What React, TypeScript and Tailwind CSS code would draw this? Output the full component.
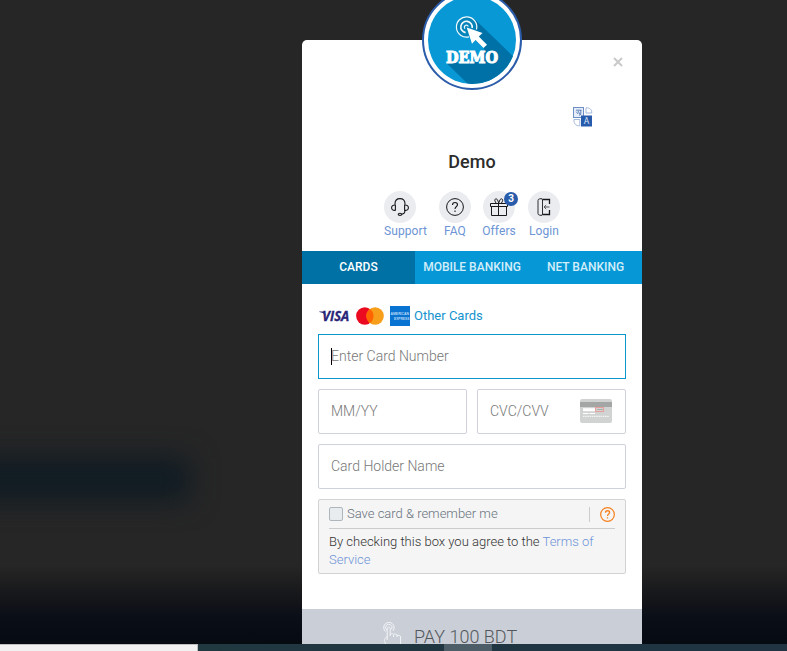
import type { ReactNode } from 'react';

function DemoLogo() {
  return (
    <svg className="block h-full w-full" viewBox="0 0 100 100">
      <defs>
        <clipPath id="disc"><circle cx="50" cy="50" r="44" /></clipPath>
      </defs>
      <circle cx="50" cy="50" r="49" fill="#fff" stroke="#2a5caa" strokeWidth="2" />
      <circle cx="50" cy="50" r="44" fill="#0798d5" />
      <g clipPath="url(#disc)">
        <path d="M52.5 29L98 73L80 100H52L24.5 73L62 72V58L45 43Z" fill="#0071a6" />
      </g>
      <circle cx="44.5" cy="37" r="10.2" fill="#0784ba" />
      <g fill="none" stroke="#f4fbff">
        <path d="M47 46.9A10.2 10.2 0 1 1 54.5 39.5" strokeWidth="1.2" />
        <path d="M43.6 42.6A5.7 5.7 0 1 1 50.1 38" strokeWidth="1.6" />
        <path d="M43 38.6a2 2 0 1 1 3.3-2" strokeWidth="1.2" />
      </g>
      <path d="M44.7 37.5L60.5 43L56.8 46.5L65 54.8L61.5 58L53.5 50L50 53.8Z" fill="#fff" />
      <text x="50" y="73" textAnchor="middle" textLength="52" lengthAdjust="spacingAndGlyphs" fill="#fff" stroke="#fff" strokeWidth="1.1" fontSize="16" fontWeight="700" fontFamily="'DejaVu Serif', serif">DEMO</text>
    </svg>
  );
}

function TranslateIcon() {
  return (
    <svg className="block h-5 w-5" viewBox="0 0 20 20">
      <rect x="0.5" y="0.5" width="10" height="10" fill="#e6edf8" stroke="#6d8ec5" />
      <path d="M3 3.2h5.4M3.2 4.7l2 2.3M5 4l2.2 3.6M7.8 3v4.4L6 8.4" stroke="#5077b6" strokeWidth=".9" fill="none" />
      <path d="M13 .8c4 0 5.8 1.8 5.8 5.2M13 6h5.8M13 .8v5.2M.9 12.5c0 4.4 1.8 6.3 5.9 6.3M.9 12.5h5.9v6.3" fill="none" stroke="#a5b9dc" strokeWidth="1" />
      <rect x="8" y="8.5" width="11" height="11" fill="#285bab" />
      <text x="13.5" y="17.2" textAnchor="middle" fill="#dce7f7" fontSize="8.5" fontFamily="Roboto, sans-serif">A</text>
    </svg>
  );
}

function HeadsetIcon() {
  return (
    <svg className="h-[18px] w-[18px]" viewBox="0 0 18 18" fill="none" stroke="#16181d" strokeWidth="1.1">
      <path d="M4 6.5V5.8C4 2.4 6 .6 9 .6s5 1.8 5 5.2v.7" />
      <path d="M4.4 7v5.3C2 12.6.6 11.7.6 9.8S2 6.8 4.4 7ZM13.6 7v5.3c2.4.3 3.8-.6 3.8-2.5S16 6.8 13.6 7Z" />
      <path d="M14 12.3c0 2.3-1.2 3.7-3.2 3.9" />
      <ellipse cx="9" cy="16.3" rx="1.8" ry="1.1" />
    </svg>
  );
}

function QuestionIcon() {
  return (
    <svg className="h-[18px] w-[18px]" viewBox="0 0 18 18" fill="none" stroke="#16181d">
      <circle cx="9" cy="9" r="8.4" />
      <path d="M6.5 7C6.5 5.2 7.5 4.5 9 4.5s2.5.8 2.5 2.3C11.5 8.5 9 8.6 9 11.1M9 12.5V14" strokeWidth="1.1" />
    </svg>
  );
}

function GiftIcon() {
  return (
    <svg className="h-[20px] w-[18px]" viewBox="0 0 18 20" fill="none" stroke="#16181d" strokeWidth="1">
      <path d="M.5 6.5h17v3H.5ZM1.5 9.5h15v9h-15ZM8.5 6.5v12" />
      <path d="M8.7 6L7.6 3C6.6 1 4.1 1.8 5 4.1L6 6M8.7 6L9.9 3c1-2 3.5-1.2 2.6 1.1l-1 1.9" />
    </svg>
  );
}

function DoorIcon() {
  return (
    <svg className="h-[18px] w-[14px]" viewBox="0 0 14 18" fill="none" stroke="#16181d">
      <path d="M2.2 1L4 .6Q5.5.4 5.5 2V16q0 1.6-1.5 1.4L2.2 17Q1 16.7 1 15.5V2.5Q1 1.3 2.2 1Z" strokeWidth=".9" />
      <path d="M5.6 1.5h6.9V6M12.5 12v4.5H5.6" strokeWidth="1.3" />
      <path d="M12.5 9H7M9.2 7L7 9l2.2 2" strokeWidth="1" stroke="#55575c" />
    </svg>
  );
}

function VisaMark() {
  return (
    <svg className="h-[14px] w-[32px]" viewBox="0 0 32 14">
      <text x="4.3" y="12" fill="#292477" stroke="#292477" strokeWidth=".3" textLength="27" lengthAdjust="spacingAndGlyphs" fontFamily="'Open Sans', sans-serif" fontSize="13.5" fontWeight="700" fontStyle="italic">VISA</text>
      <path d="M1.3 2.4H6.4l1.3 4C6 4.4 4 3.2 1.3 2.9Z" fill="#292477" />
    </svg>
  );
}

function MastercardMark() {
  return (
    <svg className="h-[18px] w-[28px]" viewBox="0 0 28 18">
      <circle cx="8.8" cy="9" r="8.7" fill="#eb0a20" />
      <circle cx="19.1" cy="9" r="8.7" fill="#f79e1b" />
      <path d="M14 2a8.7 8.7 0 0 1 0 14a8.7 8.7 0 0 1 0-14" fill="#ff6500" />
    </svg>
  );
}

function AmexMark() {
  return (
    <svg className="h-5 w-5" viewBox="0 0 20 20" fontFamily="'Liberation Sans', sans-serif" fontWeight="700">
      <rect width="20" height="20" fill="#0873d0" />
      <g fill="#b9daf6" fontSize="3.8">
        <text x=".5" y="9.3" textLength="18.5" lengthAdjust="spacingAndGlyphs">AMERICAN</text>
        <text x="4" y="13.8" textLength="15.3" lengthAdjust="spacingAndGlyphs">EXPRESS</text>
      </g>
    </svg>
  );
}

function CvcCard() {
  return (
    <svg className="h-6 w-8" viewBox="0 0 32 24">
      <rect width="32" height="24" rx="2" fill="#d1d3d3" />
      <rect y="3" width="32" height="5" fill="#a4a5a5" />
      <path d="M3 9.2h13v3H3Z" fill="#fff" />
      <path d="M17.5 10.5h5" stroke="#999" strokeWidth="1.2" strokeDasharray="1.2 .7" />
      <rect x="15.5" y="8.5" width="8" height="4" fill="none" stroke="#e5a09c" />
      <path d="M3 14.5h5.5M9.5 14.5H15" stroke="#fff" strokeWidth="1" />
      <path d="M3 17.3h26" stroke="#f4f4f4" strokeWidth="1.2" strokeDasharray="1.5 .7" />
    </svg>
  );
}

function TapIcon() {
  return (
    <svg className="h-[28px] w-[20px]" viewBox="0 0 20 28" fill="none" stroke="#f3f5f8" strokeWidth="1">
      <path d="M2.5 9.5A5.2 5.2 0 1 1 10 8.8M3.8 8A3.2 3.2 0 1 1 8.5 7.2" />
      <path d="M4.2 18V6.7c0-2.2 3-2.2 3 0V14M7.2 13c0-2 3.4-2 3.4 0v2M10.6 13c0-1.5 3.4-1.5 3.4.5V15M14 14c0-1.5 3.6-1 3.6 1v7c0 3-1 4-2 5M4.2 14.5L2 16.5c-2 2 1 6 3.5 10" />
    </svg>
  );
}

function Shortcut({ label, icon, className, badge }: { label: string; icon: ReactNode; className: string; badge?: string }) {
  return (
    <div className={`flex w-8 flex-col ${className}`}>
      <div className="relative flex h-8 w-8 items-center justify-center rounded-full bg-[#ebecf0]">
        {icon}
        {badge && <span className="absolute left-[21px] top-px flex h-[14px] w-[14px] items-center justify-center rounded-full bg-[#285baa] text-[10px] font-bold leading-none text-white">{badge}</span>}
      </div>
      <span className="self-center whitespace-nowrap text-[12px] leading-4 tracking-[0.1px] text-[#6d94d5]">{label}</span>
    </div>
  );
}

function Field({ children, className = 'rounded-[2px] border-[#cfd2da] pr-[13px]' }: { children: ReactNode; className?: string }) {
  return <div className={`flex h-[45px] flex-1 items-center border bg-white pl-3 text-[14px] font-light text-[#777] ${className}`}>{children}</div>;
}

export default function App() {
  return (
    <div className="flex h-[651px] w-[787px] flex-col overflow-hidden bg-[#262626] font-[Roboto,sans-serif]">
      <main className="relative flex h-[644px] shrink-0 overflow-hidden bg-[linear-gradient(180deg,#262626_0px,#262626_565px,#16171a_596px,#0a0e17_618px,#060a11_644px)] pl-[302px] pt-10">
        <div className="absolute -left-10 top-[458px] h-[42px] w-[229px] bg-[#0f1b23] blur-[14px]" />
        <section className="relative flex h-[604px] w-[340px] flex-col overflow-visible rounded-t-[5px] bg-white">
          <div className="absolute -top-[50px] left-[120px] h-[100px] w-[100px]"><DemoLogo /></div>
          <div className="flex h-[43px] items-center justify-end pr-[19px]">
            <svg className="h-[10px] w-[10px]" viewBox="0 0 10 10" stroke="#c9c9c9" strokeWidth="2"><path d="M1 1l8 8M9 1L1 9" /></svg>
          </div>
          <div className="flex h-[59px] justify-end pr-[49px] pt-[24px]"><TranslateIcon /></div>
          <h1 className="h-[49px] text-center text-[18px] font-medium leading-[40px] text-[#2c2c2c]">Demo</h1>
          <div className="flex h-[60px] shrink-0 pl-[82px]">
            <Shortcut label="Support" className="mr-[23px] [&>span]:translate-x-[5.5px]" icon={<HeadsetIcon />} />
            <Shortcut label="FAQ" className="mr-3" icon={<QuestionIcon />} />
            <Shortcut label="Offers" className="mr-[13px]" icon={<GiftIcon />} badge="3" />
            <Shortcut label="Login" className="" icon={<DoorIcon />} />
          </div>
          <nav className="grid h-[33px] shrink-0 grid-cols-[113px_114px_113px] bg-[#0698d6] text-center text-[12px] font-medium leading-8 text-[#d3eefa]">
            <span className="bg-[#0071a5] text-white">CARDS</span><span>MOBILE BANKING</span><span>NET BANKING</span>
          </nav>
          <div className="flex flex-1 flex-col gap-[10px] px-4 pt-[22px]">
            <div className="-mb-[10px] flex h-[28px] shrink-0 items-start">
              <div className="mt-[3px]"><VisaMark /></div>
              <div className="ml-[6px] mt-px"><MastercardMark /></div>
              <div className="ml-[6px]"><AmexMark /></div>
              <span className="ml-1 text-[13px] leading-5 text-[#1593ce]">Other Cards</span>
            </div>
            <div className="flex"><Field className="border-[#0b96cc]"><span className="h-[17px] w-px bg-black" /><span className="-ml-px">Enter Card Number</span></Field></div>
            <div className="flex gap-[10px]">
              <Field>MM/YY</Field>
              <Field><span className="flex-1">CVC/CVV</span><span className="-mt-px"><CvcCard /></span></Field>
            </div>
            <div className="flex"><Field>Card Holder Name</Field></div>
            <div className="flex h-[75px] shrink-0 flex-col rounded-[2px] border border-[#d1d3d5] bg-[#f5f5f5] px-[10px] text-[13px] font-light">
              <div className="flex h-[29px] items-center border-b border-[#ccc] text-[#67737d]">
                <span className="-mt-px h-[14px] w-[14px] rounded-[2px] border border-[#adb5bd] bg-[#e9ecef]" />
                <span className="ml-1 flex-1">Save card &amp; remember me</span>
                <span className="mr-[10px] h-[15px] w-px bg-[#ccc]" />
                <svg className="h-[15px] w-[15px]" viewBox="0 0 16 16" fill="none" stroke="#f58220"><circle cx="8" cy="8" r="7.3" strokeWidth="1.3" /><path d="M5.8 6c0-1.4.9-2 2.2-2s2.2.6 2.2 1.9C10.2 7.4 8 7.5 8 9.5M8 10.9v1.3" strokeWidth="1.4" /></svg>
              </div>
              <p className="pt-[4px] leading-[18px] text-[#333]">By checking this box you agree to the <span className="text-[#6d94d5]">Terms of Service</span></p>
            </div>
          </div>
          <div className="flex h-[35px] shrink-0 overflow-hidden bg-[#caced6] pl-[81px] pt-[13px]">
            <TapIcon />
            <span className="ml-[11px] text-[18px] font-light leading-[29px] text-[#54585d]">PAY 100 BDT</span>
          </div>
        </section>
      </main>
      <footer className="flex h-[7px] shrink-0 bg-[linear-gradient(90deg,#203840_198px,#203443)]">
        <div className="w-[198px] border-r border-t border-[#bfbfbf] bg-[#f1f1f1]" />
        <div className="ml-[246px] w-12 bg-[#4d5e68]" />
      </footer>
    </div>
  );
}
